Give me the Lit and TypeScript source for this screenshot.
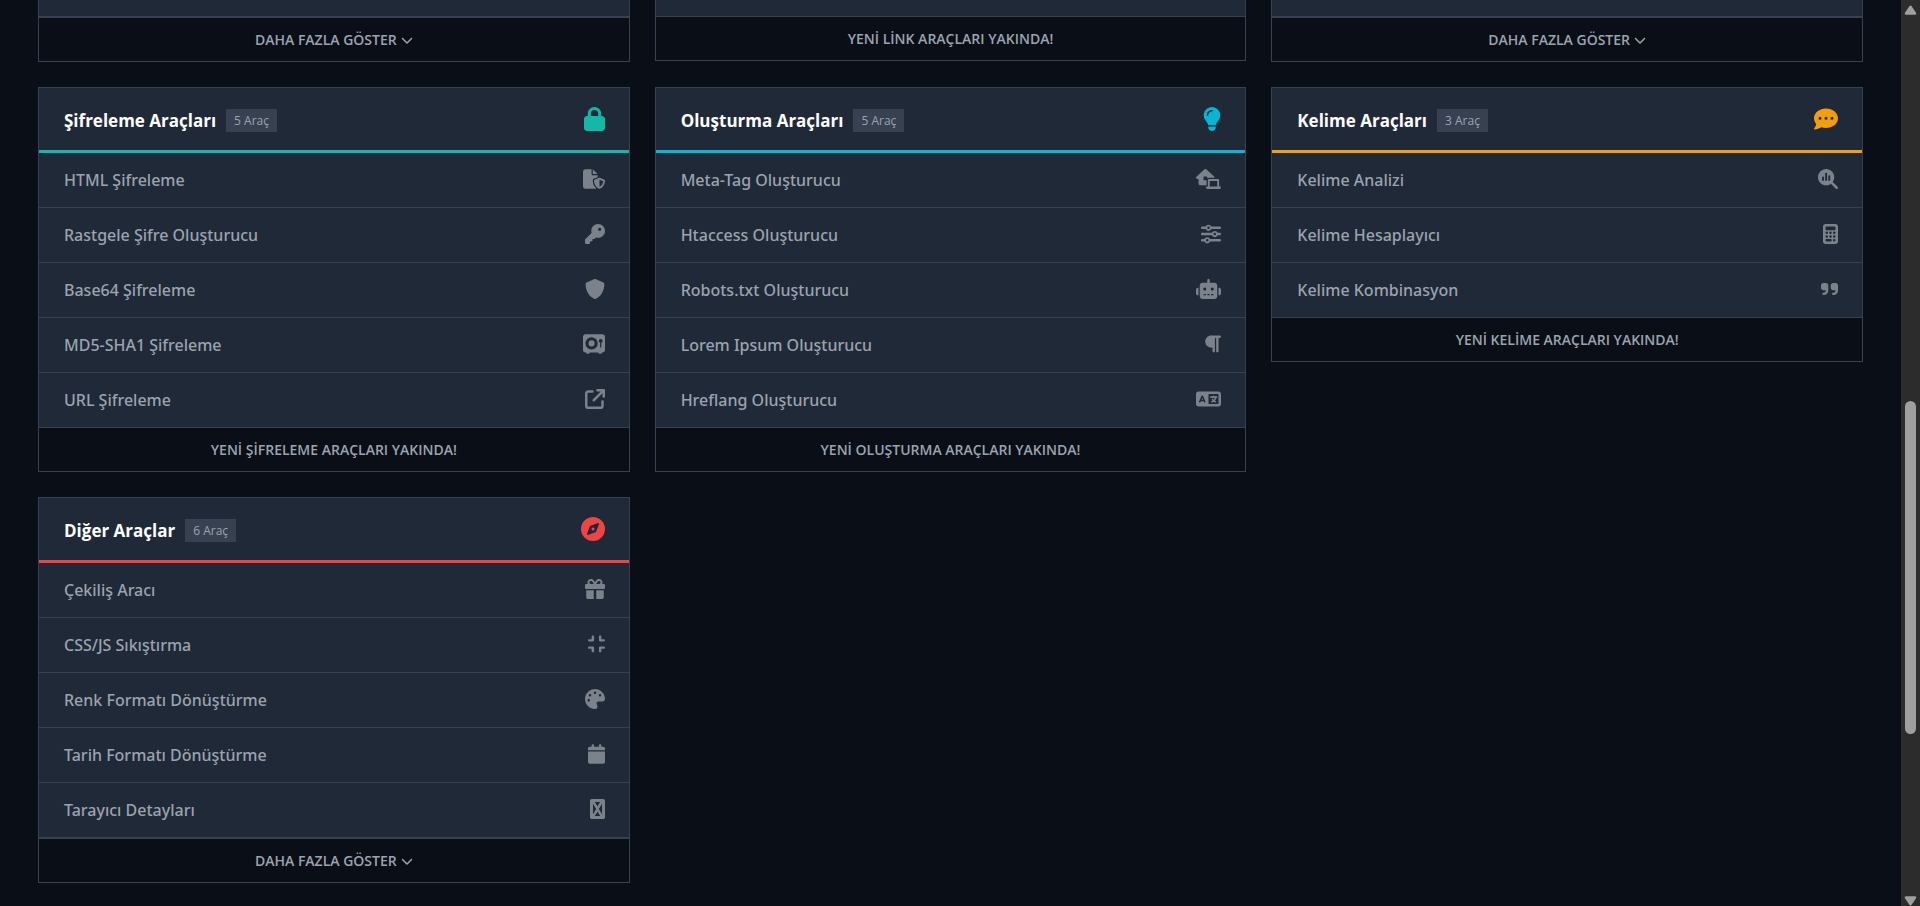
import { LitElement, html, css, nothing } from "lit";
import { customElement, property } from "lit/decorators.js";

type Icon = { w: number; d: string };

const ICONS: Record<string, Icon> = {
  lock: { w: 448, d: "M144 144v48H304V144c0-44.2-35.8-80-80-80s-80 35.8-80 80zM80 192V144C80 64.5 144.5 0 224 0s144 64.5 144 144v48h16c35.3 0 64 28.7 64 64V448c0 35.3-28.7 64-64 64H64c-35.3 0-64-28.7-64-64V256c0-35.3 28.7-64 64-64H80z" },
  fileShield: { w: 576, d: "M0 64C0 28.7 28.7 0 64 0H224V128c0 17.7 14.3 32 32 32H384v47l-92.8 37.1c-21.3 8.5-35.2 29.1-35.2 52c0 56.6 18.9 148 94.2 208.3c-9 4.8-19.3 7.6-30.2 7.6H64c-35.3 0-64-28.7-64-64V64zm384 64H256V0L384 128zm39.1 97.7c5.7-2.3 12.1-2.3 17.8 0l120 48C570 277.4 576 286.2 576 296c0 63.3-25.9 168.8-134.8 214.2c-5.9 2.5-12.6 2.5-18.5 0C313.9 464.8 288 359.3 288 296c0-9.8 6-18.6 15.1-22.3l120-48zM527.4 312L432 273.8V461.7c68.2-33 91.5-99 95.4-149.7z" },
  key: { w: 512, d: "M336 352c97.2 0 176-78.8 176-176S433.2 0 336 0S160 78.8 160 176c0 18.7 2.9 36.8 8.3 53.7L7 391c-4.5 4.5-7 10.6-7 17v80c0 13.3 10.7 24 24 24h80c13.3 0 24-10.7 24-24V448h40c13.3 0 24-10.7 24-24V384h40c6.4 0 12.5-2.5 17-7l33.3-33.3c16.9 5.4 35 8.3 53.7 8.3zM376 96a40 40 0 1 1 0 80 40 40 0 1 1 0-80z" },
  shield: { w: 512, d: "M256 0c4.6 0 9.2 1 13.4 2.9L457.7 82.8c22 9.3 38.4 31 38.3 57.2c-.5 99.2-41.3 280.7-213.6 363.2c-16.7 8-36.1 8-52.8 0C57.3 420.7 16.5 239.2 16 140c-.1-26.2 16.3-47.9 38.3-57.2L242.7 2.9C246.8 1 251.4 0 256 0z" },
  vault: { w: 576, d: "M64 0C28.7 0 0 28.7 0 64V416c0 35.3 28.7 64 64 64H80l16 32h64l16-32H400l16 32h64l16-32h16c35.3 0 64-28.7 64-64V64c0-35.3-28.7-64-64-64H64zM224 320a80 80 0 1 0 0-160 80 80 0 1 0 0 160zm0-240a160 160 0 1 1 0 320 160 160 0 1 1 0-320zM480 221.3V336c0 8.8-7.2 16-16 16s-16-7.2-16-16V221.3c-18.6-6.6-32-24.4-32-45.3c0-26.5 21.5-48 48-48s48 21.5 48 48c0 20.9-13.4 38.7-32 45.3z" },
  external: { w: 512, d: "M320 0c-17.7 0-32 14.3-32 32s14.3 32 32 32h82.7L201.4 265.4c-12.5 12.5-12.5 32.8 0 45.3s32.8 12.5 45.3 0L448 109.3V192c0 17.7 14.3 32 32 32s32-14.3 32-32V32c0-17.7-14.3-32-32-32H320zM80 32C35.8 32 0 67.8 0 112V432c0 44.2 35.8 80 80 80H400c44.2 0 80-35.8 80-80V320c0-17.7-14.3-32-32-32s-32 14.3-32 32V432c0 8.8-7.2 16-16 16H80c-8.8 0-16-7.2-16-16V112c0-8.8 7.2-16 16-16H192c17.7 0 32-14.3 32-32s-14.3-32-32-32H80z" },
  bulb: { w: 384, d: "M272 384c9.6-31.9 29.5-59.1 49.2-86.2l0 0c5.2-7.1 10.4-14.2 15.4-21.4c19.8-28.5 31.4-63 31.4-100.3C368 78.8 289.2 0 192 0S16 78.8 16 176c0 37.3 11.6 71.9 31.4 100.3c5 7.2 10.2 14.3 15.4 21.4l0 0c19.8 27.1 39.7 54.4 49.2 86.2H272zM192 512c44.2 0 80-35.8 80-80V416H112v16c0 44.2 35.8 80 80 80zM112 176c0 8.8-7.2 16-16 16s-16-7.2-16-16c0-61.9 50.1-112 112-112c8.8 0 16 7.2 16 16s-7.2 16-16 16c-44.2 0-80 35.8-80 80z" },
  houseLaptop: { w: 640, d: "M218.3 8.5c12.3-11.3 31.2-11.3 43.4 0l208 192c6.7 6.2 10.3 14.8 10.3 23.5H336c-19.1 0-36.3 8.4-48 21.7V208c0-8.8-7.2-16-16-16H208c-8.8 0-16 7.2-16 16v64c0 8.8 7.2 16 16 16h64V416H112c-26.5 0-48-21.5-48-48V256H32c-13.2 0-25-8.1-29.8-20.3s-1.6-26.2 8.1-35.2l208-192zM352 304V448H544V304H352zm-48-16c0-17.7 14.3-32 32-32H560c17.7 0 32 14.3 32 32V448h32c8.8 0 16 7.2 16 16c0 26.5-21.5 48-48 48H544 352 304c-26.5 0-48-21.5-48-48c0-8.8 7.2-16 16-16h32V288z" },
  sliders: { w: 512, d: "M0 416c0 17.7 14.3 32 32 32l54.7 0c12.3 28.3 40.5 48 73.3 48s61-19.7 73.3-48L480 448c17.7 0 32-14.3 32-32s-14.3-32-32-32l-246.7 0c-12.3-28.3-40.5-48-73.3-48s-61 19.7-73.3 48L32 384c-17.7 0-32 14.3-32 32zm128 0a32 32 0 1 1 64 0 32 32 0 1 1-64 0zM320 256a32 32 0 1 1 64 0 32 32 0 1 1-64 0zm32-80c-32.8 0-61 19.7-73.3 48L32 224c-17.7 0-32 14.3-32 32s14.3 32 32 32l246.7 0c12.3 28.3 40.5 48 73.3 48s61-19.7 73.3-48l54.7 0c17.7 0 32-14.3 32-32s-14.3-32-32-32l-54.7 0c-12.3-28.3-40.5-48-73.3-48zM192 128a32 32 0 1 1 0-64 32 32 0 1 1 0 64zm73.3-64C253 35.7 224.8 16 192 16s-61 19.7-73.3 48L32 64C14.3 64 0 78.3 0 96s14.3 32 32 32l86.7 0c12.3 28.3 40.5 48 73.3 48s61-19.7 73.3-48L480 128c17.7 0 32-14.3 32-32s-14.3-32-32-32L265.3 64z" },
  robot: { w: 640, d: "M320 0c17.7 0 32 14.3 32 32V96H472c39.8 0 72 32.2 72 72V440c0 39.8-32.2 72-72 72H168c-39.8 0-72-32.2-72-72V168c0-39.8 32.2-72 72-72H288V32c0-17.7 14.3-32 32-32zM208 384c-8.8 0-16 7.2-16 16s7.2 16 16 16h32c8.8 0 16-7.2 16-16s-7.2-16-16-16H208zm96 0c-8.8 0-16 7.2-16 16s7.2 16 16 16h32c8.8 0 16-7.2 16-16s-7.2-16-16-16H304zm96 0c-8.8 0-16 7.2-16 16s7.2 16 16 16h32c8.8 0 16-7.2 16-16s-7.2-16-16-16H400zM264 256a40 40 0 1 0-80 0 40 40 0 1 0 80 0zm152 40a40 40 0 1 0 0-80 40 40 0 1 0 0 80zM48 224H64V416H48c-26.5 0-48-21.5-48-48V272c0-26.5 21.5-48 48-48zm544 0c26.5 0 48 21.5 48 48v96c0 26.5-21.5 48-48 48H576V224h16z" },
  paragraph: { w: 448, d: "M192 32h64H416c17.7 0 32 14.3 32 32s-14.3 32-32 32H384l0 352c0 17.7-14.3 32-32 32s-32-14.3-32-32l0-352H288V448c0 17.7-14.3 32-32 32s-32-14.3-32-32V352H192c-88.4 0-160-71.6-160-160s71.6-160 160-160z" },
  language: { w: 640, d: "M0 128C0 92.7 28.7 64 64 64H256h48 16H576c35.3 0 64 28.7 64 64V384c0 35.3-28.7 64-64 64H320 304 256 64c-35.3 0-64-28.7-64-64V128zm320 0V384H576V128H320zM178.3 175.9c-3.2-7.2-10.4-11.9-18.3-11.9s-15.1 4.7-18.3 11.9l-64 144c-4.5 10.1 .1 21.9 10.2 26.4s21.9-.1 26.4-10.2l8.9-20.1h73.6l8.9 20.1c4.5 10.1 16.3 14.6 26.4 10.2s14.6-16.3 10.2-26.4l-64-144zM160 233.2L179 276H141l19-42.8zM448 164c11 0 20 9 20 20v4h44 16c11 0 20 9 20 20s-9 20-20 20h-2l-1.6 4.5c-8.9 24.4-22.4 46.6-39.6 65.4c.9 .6 1.8 1.1 2.7 1.6l18.9 11.3c9.5 5.7 12.5 18 6.9 27.4s-18 12.5-27.4 6.9l-18.9-11.3c-4.5-2.7-8.8-5.5-13.1-8.5c-10.6 7.5-21.9 14-34 19.4l-3.6 1.6c-10.1 4.5-21.9-.1-26.4-10.2s.1-21.9 10.2-26.4l3.6-1.6c6.4-2.9 12.6-6.1 18.5-9.8l-12.2-12.2c-7.8-7.8-7.8-20.5 0-28.3s20.5-7.8 28.3 0l14.6 14.6 .5 .5c12.4-13.1 22.5-28.3 29.8-45H448 376c-11 0-20-9-20-20s9-20 20-20h52v-4c0-11 9-20 20-20z" },
  comment: { w: 512, d: "M256 448c141.4 0 256-93.1 256-208S397.4 32 256 32S0 125.1 0 240c0 45.1 17.7 86.8 47.7 120.9c-1.9 24.5-11.4 46.3-21.4 62.9c-5.5 9.2-11.1 16.6-15.2 21.6c-2.1 2.5-3.7 4.4-4.9 5.7c-.6 .6-1 1.1-1.3 1.4l-.3 .3C0 457.3-1.4 464.2 1.1 470.2c2.5 6 8.3 9.8 14.8 9.8c28.7 0 57.6-8.9 81.6-19.3c22.9-10 42.4-21.9 54.3-30.6c31.8 11.5 67 17.9 104.1 17.9zM128 208a32 32 0 1 1 0 64 32 32 0 1 1 0-64zm128 0a32 32 0 1 1 0 64 32 32 0 1 1 0-64zm96 32a32 32 0 1 1 64 0 32 32 0 1 1-64 0z" },
  searchChart: { w: 512, d: "M416 208c0 45.9-14.9 88.3-40 122.7L502.6 457.4c12.5 12.5 12.5 32.8 0 45.3s-32.8 12.5-45.3 0L330.7 376c-34.4 25.2-76.8 40-122.7 40C93.1 416 0 322.9 0 208S93.1 0 208 0S416 93.1 416 208zm-312 8v64c0 13.3 10.7 24 24 24s24-10.7 24-24V216c0-13.3-10.7-24-24-24s-24 10.7-24 24zm80-96V280c0 13.3 10.7 24 24 24s24-10.7 24-24V120c0-13.3-10.7-24-24-24s-24 10.7-24 24zm80 64v96c0 13.3 10.7 24 24 24s24-10.7 24-24V184c0-13.3-10.7-24-24-24s-24 10.7-24 24z" },
  calculator: { w: 384, d: "M64 0C28.7 0 0 28.7 0 64V448c0 35.3 28.7 64 64 64H320c35.3 0 64-28.7 64-64V64c0-35.3-28.7-64-64-64H64zM96 64H288c17.7 0 32 14.3 32 32v32c0 17.7-14.3 32-32 32H96c-17.7 0-32-14.3-32-32V96c0-17.7 14.3-32 32-32zM64 224a32 32 0 1 1 64 0 32 32 0 1 1-64 0zM64 320a32 32 0 1 1 64 0 32 32 0 1 1-64 0zM160 224a32 32 0 1 1 64 0 32 32 0 1 1-64 0zM160 320a32 32 0 1 1 64 0 32 32 0 1 1-64 0zM256 224a32 32 0 1 1 64 0 32 32 0 1 1-64 0zM256 320a32 32 0 1 1 64 0 32 32 0 1 1-64 0zM256 416a32 32 0 1 1 64 0 32 32 0 1 1-64 0zM96 384h96c17.7 0 32 14.3 32 32s-14.3 32-32 32H96c-17.7 0-32-14.3-32-32s14.3-32 32-32z" },
  quote: { w: 448, d: "M448 296c0 66.3-53.7 120-120 120h-8c-17.7 0-32-14.3-32-32s14.3-32 32-32h8c30.9 0 56-25.1 56-56v-8H320c-35.3 0-64-28.7-64-64V160c0-35.3 28.7-64 64-64h64c35.3 0 64 28.7 64 64v136zm-256 0c0 66.3-53.7 120-120 120H64c-17.7 0-32-14.3-32-32s14.3-32 32-32h8c30.9 0 56-25.1 56-56v-8H64c-35.3 0-64-28.7-64-64V160c0-35.3 28.7-64 64-64h64c35.3 0 64 28.7 64 64v136z" },
  compass: { w: 512, d: "M256 512A256 256 0 1 0 256 0a256 256 0 1 0 0 512zm50.7-186.9L162.4 380.6c-19.4 7.5-38.5-11.6-31-31l55.5-144.3c3.3-8.5 9.9-15.1 18.4-18.4l144.3-55.5c19.4-7.5 38.5 11.6 31 31L325.1 306.7c-3.2 8.5-9.9 15.1-18.4 18.4zM288 256a32 32 0 1 0-64 0 32 32 0 1 0 64 0z" },
  gift: { w: 512, d: "M190.5 68.8L225.3 128H224 152c-22.1 0-40-17.9-40-40s17.9-40 40-40h2.2c14.9 0 28.8 7.9 36.3 20.8zM64 88c0 14.4 3.5 28 9.6 40H32c-17.7 0-32 14.3-32 32v64c0 17.7 14.3 32 32 32H480c17.7 0 32-14.3 32-32V160c0-17.7-14.3-32-32-32H438.4c6.1-12 9.6-25.6 9.6-40c0-48.6-39.4-88-88-88h-2.2c-31.9 0-61.5 16.9-77.7 44.4L256 85.5l-24.1-41C215.7 16.9 186.1 0 154.2 0H152C103.4 0 64 39.4 64 88zm336 0c0 22.1-17.9 40-40 40H288h-1.3l34.8-59.2C329.1 55.9 342.9 48 357.8 48H360c22.1 0 40 17.9 40 40zM32 288V464c0 26.5 21.5 48 48 48H224V288H32zM288 512H432c26.5 0 48-21.5 48-48V288H288V512z" },
  compress: { w: 448, d: "M160 64c0-17.7-14.3-32-32-32s-32 14.3-32 32v64H32c-17.7 0-32 14.3-32 32s14.3 32 32 32h96c17.7 0 32-14.3 32-32V64zM32 320c-17.7 0-32 14.3-32 32s14.3 32 32 32H96v64c0 17.7 14.3 32 32 32s32-14.3 32-32V352c0-17.7-14.3-32-32-32H32zM352 64c0-17.7-14.3-32-32-32s-32 14.3-32 32v96c0 17.7 14.3 32 32 32h96c17.7 0 32-14.3 32-32s-14.3-32-32-32H352V64zM320 320c-17.7 0-32 14.3-32 32v96c0 17.7 14.3 32 32 32s32-14.3 32-32V384h64c17.7 0 32-14.3 32-32s-14.3-32-32-32H320z" },
  palette: { w: 512, d: "M512 256c0 .9 0 1.8 0 2.7c-.4 36.5-33.6 61.3-70.1 61.3H344c-26.5 0-48 21.5-48 48c0 3.4 .4 6.7 1 9.9c2.1 10.2 6.5 20 10.8 29.9c6.1 13.8 12.1 27.5 12.1 42c0 31.8-21.6 60.7-53.4 62c-3.5 .1-7 .2-10.6 .2C114.6 512 0 397.4 0 256S114.6 0 256 0S512 114.6 512 256zM128 288a32 32 0 1 0-64 0 32 32 0 1 0 64 0zm0-96a32 32 0 1 0 0-64 32 32 0 1 0 0 64zM288 96a32 32 0 1 0-64 0 32 32 0 1 0 64 0zm96 96a32 32 0 1 0 0-64 32 32 0 1 0 0 64z" },
  calendar: { w: 448, d: "M96 32V64H48C21.5 64 0 85.5 0 112v48H448V112c0-26.5-21.5-48-48-48H352V32c0-17.7-14.3-32-32-32s-32 14.3-32 32V64H160V32c0-17.7-14.3-32-32-32S96 14.3 96 32zM448 192H0V464c0 26.5 21.5 48 48 48H400c26.5 0 48-21.5 48-48V192z" },
  crossBox: { w: 384, d: "M48 0H336c26.5 0 48 21.5 48 48V464c0 26.5-21.5 48-48 48H48c-26.5 0-48-21.5-48-48V48C0 21.5 21.5 0 48 0zM124 76L192 184L260 76zM76 124V388L158 256zM308 124L226 256L308 388zM192 328L124 436H260z" },
  chevron: { w: 512, d: "M233.4 406.6c12.5 12.5 32.8 12.5 45.3 0l192-192c12.5-12.5 12.5-32.8 0-45.3s-32.8-12.5-45.3 0L256 338.7 86.6 169.4c-12.5-12.5-32.8-12.5-45.3 0s-12.5 32.8 0 45.3l192 192z" },
};

@customElement("tool-icon")
class ToolIcon extends LitElement {
  @property() name = "";
  @property({ type: Number }) size = 20;

  static styles = css`
    :host { display: flex; flex: none; }
    svg { display: block; fill: currentColor; }
  `;

  render() {
    const icon = ICONS[this.name];
    const width = Math.floor((this.size * icon.w) / 512);
    return html`<svg width=${width} height=${this.size} viewBox="0 0 ${icon.w} 512" aria-hidden="true">
      <path fill-rule="evenodd" d=${icon.d}></path>
    </svg>`;
  }
}

interface Group {
  title?: string;
  icon?: string;
  accent?: string;
  tools?: [string, string][];
  count?: number;
  more?: boolean;
  soon?: string;
}

const GROUPS: Group[] = [
  { more: true },
  { soon: "YENİ LİNK ARAÇLARI YAKINDA!" },
  { more: true },
  {
    title: "Şifreleme Araçları", icon: "lock", accent: "teal", count: 5,
    tools: [
      ["HTML Şifreleme", "fileShield"],
      ["Rastgele Şifre Oluşturucu", "key"],
      ["Base64 Şifreleme", "shield"],
      ["MD5-SHA1 Şifreleme", "vault"],
      ["URL Şifreleme", "external"],
    ],
    soon: "YENİ ŞİFRELEME ARAÇLARI YAKINDA!",
  },
  {
    title: "Oluşturma Araçları", icon: "bulb", accent: "cyan", count: 5,
    tools: [
      ["Meta-Tag Oluşturucu", "houseLaptop"],
      ["Htaccess Oluşturucu", "sliders"],
      ["Robots.txt Oluşturucu", "robot"],
      ["Lorem Ipsum Oluşturucu", "paragraph"],
      ["Hreflang Oluşturucu", "language"],
    ],
    soon: "YENİ OLUŞTURMA ARAÇLARI YAKINDA!",
  },
  {
    title: "Kelime Araçları", icon: "comment", accent: "amber", count: 3,
    tools: [
      ["Kelime Analizi", "searchChart"],
      ["Kelime Hesaplayıcı", "calculator"],
      ["Kelime Kombinasyon", "quote"],
    ],
    soon: "YENİ KELİME ARAÇLARI YAKINDA!",
  },
  {
    title: "Diğer Araçlar", icon: "compass", accent: "red", count: 6,
    tools: [
      ["Çekiliş Aracı", "gift"],
      ["CSS/JS Sıkıştırma", "compress"],
      ["Renk Formatı Dönüştürme", "palette"],
      ["Tarih Formatı Dönüştürme", "calendar"],
      ["Tarayıcı Detayları", "crossBox"],
    ],
    more: true,
  },
];

@customElement("tool-card")
class ToolCard extends LitElement {
  @property({ attribute: false }) group!: Group;

  static styles = css`
    :host { display: block; }
    .card { border: 1px solid #374151; background: #1f2937; }
    .tail { border-top: 0; }
    .rest { height: 16px; }
    .head {
      display: flex; align-items: flex-start; justify-content: space-between;
      padding: 19px 24px 16px 25px; border-bottom: 3px solid;
    }
    .name { display: flex; align-items: center; gap: 10px; }
    h2 { margin: 0; font-size: 17px; line-height: 27px; font-weight: 700; color: #fff; }
    .badge {
      padding: 0 8px; background: #374151; color: #9ca3af;
      font-size: 12px; line-height: 23px;
    }
    .teal { border-color: #14b8a6; }
    .cyan { border-color: #06b6d4; }
    .amber { border-color: #f59e0b; }
    .red { border-color: #ef4444; }
    .teal tool-icon { color: #14b8a6; }
    .cyan tool-icon { color: #06b6d4; }
    .amber tool-icon { color: #f59e0b; }
    .red tool-icon { color: #ef4444; }
    ul { margin: 0; padding: 0; list-style: none; }
    li + li { border-top: 1px solid #374151; }
    a {
      display: flex; align-items: flex-start; justify-content: space-between;
      padding: 14px 24px 14px 25px; line-height: 26px; font-size: 16px; font-weight: 500;
      font-family: "Noto Sans", "Open Sans", sans-serif;
      color: #9ca3af; text-decoration: none;
    }
    a tool-icon { color: #7b828c; padding-top: 2px; }
    .foot {
      display: flex; align-items: center; justify-content: center; gap: 4px;
      box-sizing: border-box; width: 100%; margin: 0; padding: 11px 24px;
      border: 0; border-top: 1px solid #374151; background: #0a0e17;
      font-family: inherit; font-size: 14px; line-height: 21px; font-weight: 600; color: #9ca3af;
    }
    button.foot { border-top-width: 2px; cursor: pointer; }
    a:hover, button:hover { color: #fff; }
  `;

  render() {
    const g = this.group;
    return html`<section class="card ${g.title ? "" : "tail"}">
      ${g.title
        ? html`<header class="head ${g.accent}">
              <div class="name"><h2>${g.title}</h2><span class="badge">${g.count} Araç</span></div>
              <tool-icon name=${g.icon!} size="24"></tool-icon>
            </header>
            <ul>
              ${g.tools!.map(([label, icon]) => html`<li><a href="#"><span>${label}</span><tool-icon name=${icon}></tool-icon></a></li>`)}
            </ul>`
        : html`<div class="rest"></div>`}
      ${g.more
        ? html`<button class="foot" type="button">DAHA FAZLA GÖSTER<tool-icon name="chevron" size="12"></tool-icon></button>`
        : nothing}
      ${g.soon ? html`<p class="foot">${g.soon}</p>` : nothing}
    </section>`;
  }
}

@customElement("app-root")
class AppRoot extends LitElement {
  static styles = css`
    :host {
      display: flex; height: 100vh; overflow: hidden; background: #0a0e17;
      font-family: "Open Sans", "Noto Sans", sans-serif;
    }
    main {
      flex: 1; min-width: 0; display: grid; align-content: start; align-items: start;
      grid-template-columns: repeat(3, minmax(0, 1fr)); gap: 25px; padding: 0 38px;
    }
    .scroll {
      flex: none; width: 19px; box-sizing: border-box; background: #2c2c2c;
      display: flex; flex-direction: column; align-items: center; padding: 5px 0 0;
    }
    .scroll svg { display: block; flex: none; fill: #9f9f9f; }
    .before { flex: 386; }
    .thumb { flex: 333; width: 11px; border-radius: 6px; background: #9f9f9f; }
    .after { flex: 162; }
  `;

  render() {
    return html`
      <main>${GROUPS.map((g) => html`<tool-card .group=${g}></tool-card>`)}</main>
      <div class="scroll" aria-hidden="true">
        <svg width="13" height="10" viewBox="0 0 12 10"><path d="M5 1Q6 -.2 7 1L11.700 8Q12 9.500 10.800 9.800H1.200Q0 9.500 .3 8z"></path></svg>
        <div class="before"></div>
        <div class="thumb"></div>
        <div class="after"></div>
        <svg width="13" height="10" viewBox="0 0 12 10"><path d="M5 9Q6 10.200 7 9L11.700 2Q12 .5 10.800 .2H1.200Q0 .5 .3 2z"></path></svg>
      </div>
    `;
  }
}
